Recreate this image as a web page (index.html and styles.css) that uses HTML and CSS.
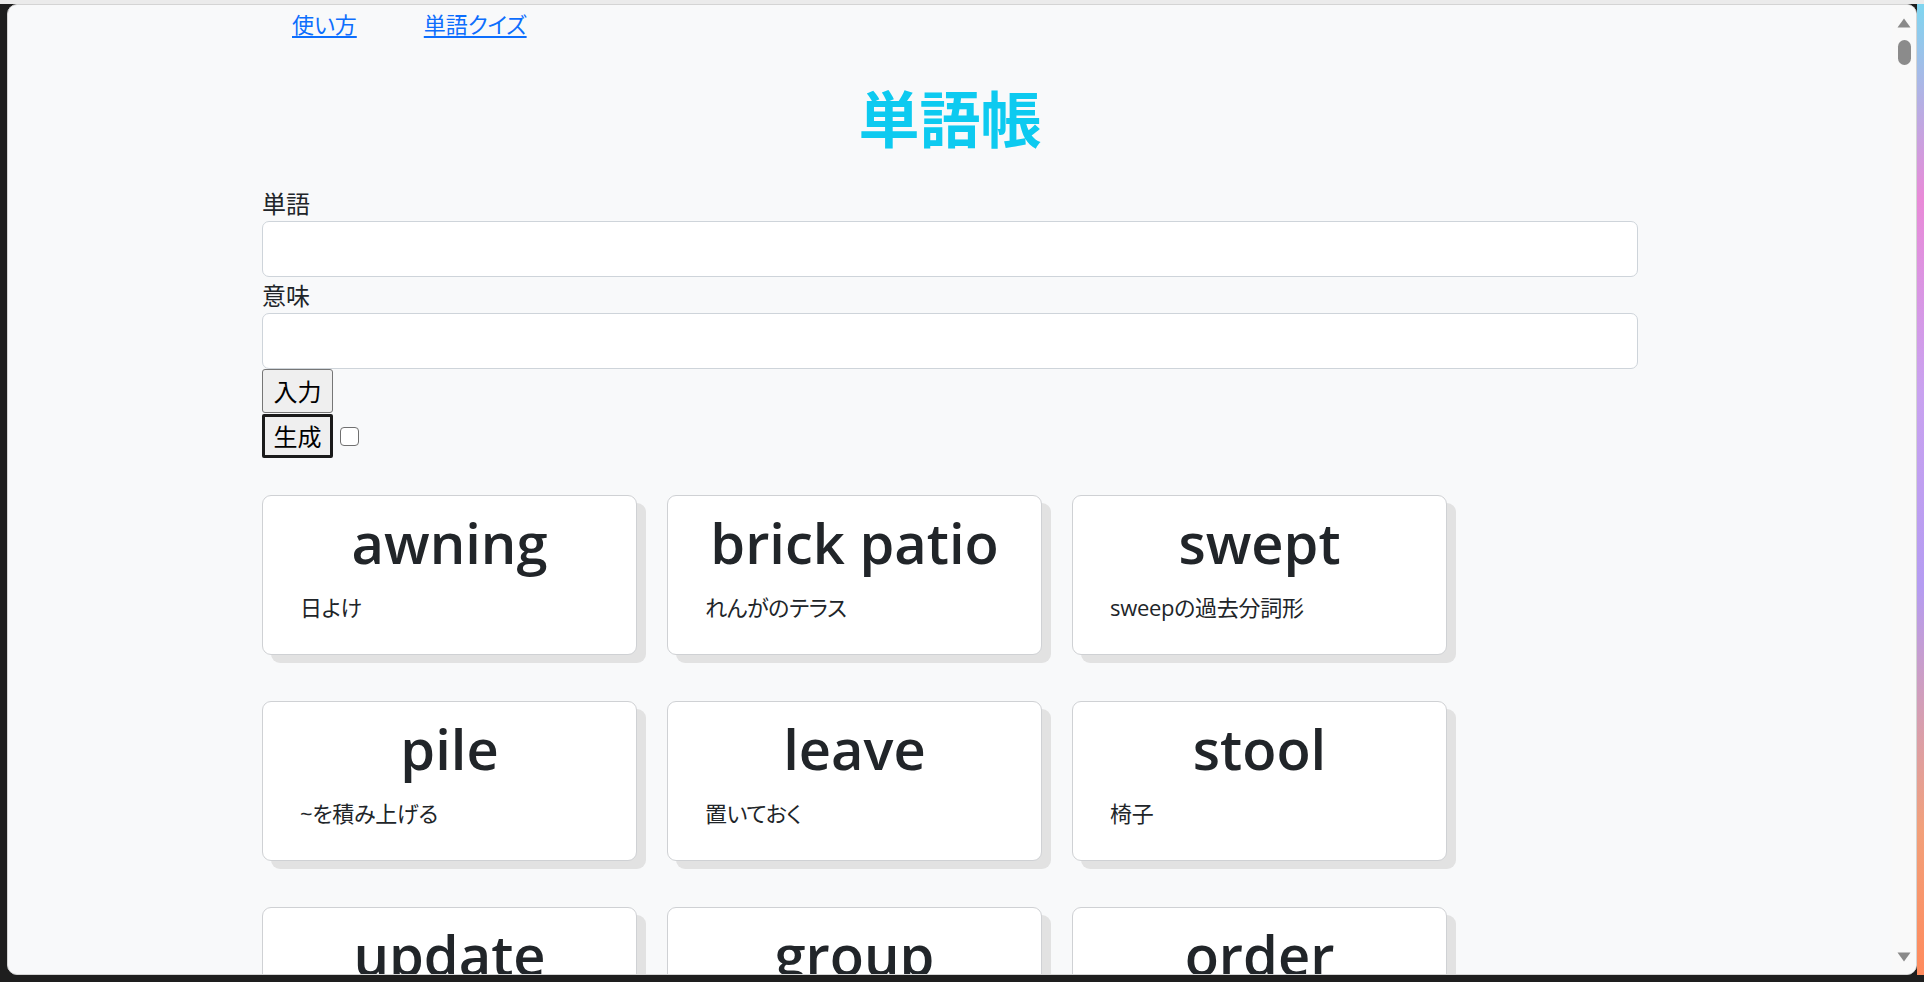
FILE: index.html
```html
<!DOCTYPE html>
<html lang="ja">
<head>
<meta charset="utf-8">
<title>単語帳</title>
<link rel="stylesheet" href="styles.css">
</head>
<body>
<div class="desktop">
  <div class="window">
    <div class="viewport">
      <div class="container">
        <nav class="topnav">
          <a href="#">使い方</a>
          <a href="#">単語クイズ</a>
        </nav>
        <h1 class="title">単語帳</h1>
        <form class="entry">
          <label class="label" for="word">単語</label>
          <input class="field" id="word" type="text">
          <label class="label" for="meaning">意味</label>
          <input class="field" id="meaning" type="text">
          <div class="btn-row"><button type="button" class="btn">入力</button></div>
          <div class="btn-row second"><button type="button" class="btn focused">生成</button><span class="check"></span></div>
        </form>
        <div class="cards">
          <div class="card"><h2 class="card-word">awning</h2><p class="card-meaning">日よけ</p></div>
          <div class="card"><h2 class="card-word">brick patio</h2><p class="card-meaning">れんがのテラス</p></div>
          <div class="card"><h2 class="card-word">swept</h2><p class="card-meaning">sweepの過去分詞形</p></div>
          <div class="card"><h2 class="card-word">pile</h2><p class="card-meaning">~を積み上げる</p></div>
          <div class="card"><h2 class="card-word">leave</h2><p class="card-meaning">置いておく</p></div>
          <div class="card"><h2 class="card-word">stool</h2><p class="card-meaning">椅子</p></div>
          <div class="card"><h2 class="card-word">update</h2><p class="card-meaning">更新する</p></div>
          <div class="card"><h2 class="card-word">group</h2><p class="card-meaning">グループ</p></div>
          <div class="card"><h2 class="card-word">order</h2><p class="card-meaning">注文</p></div>
        </div>
      </div>
    </div>
    <div class="scrollbar">
      <svg class="arrow" width="14" height="10" viewBox="0 0 14 10"><path d="M7 0.5 L13.5 9.5 L0.5 9.5 Z" fill="#8a8a8a"/></svg>
      <div class="thumb"></div>
      <svg class="arrow down" width="14" height="10" viewBox="0 0 14 10"><path d="M0.5 0.5 L13.5 0.5 L7 9.5 Z" fill="#8a8a8a"/></svg>
    </div>
  </div>
  <div class="wall-edge"></div>
</div>
</body>
</html>
```

FILE: styles.css
```css
html, body {
  margin: 0;
  height: 982px;
  overflow: hidden;
}
body {
  background: #1e1e1e;
  font-family: "Open Sans", "Noto Sans CJK JP", sans-serif;
  font-feature-settings: "palt";
  color: #212529;
}
.desktop {
  display: flex;
  height: 982px;
  box-sizing: border-box;
  padding: 4px 0 7px 7px;
  background: linear-gradient(#ebebeb 0 4px, transparent 4px);
}
.window {
  flex: none;
  width: 1910px;
  height: 971px;
  box-sizing: border-box;
  border: 1px solid #d4d4d4;
  border-radius: 10px;
  background: #f8f9fa;
  display: flex;
  overflow: hidden;
}
.viewport {
  flex: 1;
  overflow: hidden;
}
.scrollbar {
  width: 24px;
  flex: none;
  background: #f9f9f9;
  display: flex;
  flex-direction: column;
  align-items: center;
  padding: 13px 0 12px;
  box-sizing: border-box;
}
.arrow { display: block; }
.arrow.down { margin-top: auto; }
.thumb {
  width: 13px;
  height: 25px;
  margin-top: 12px;
  border-radius: 7px;
  background: #8b8b8b;
}
.wall-edge {
  flex: 1;
  background: linear-gradient(#7fd6f0, #e98ad8 20%, #c9a2f0 40%, #b59cf2 60%, #f2a07a 85%, #ff8a5c);
}
.container {
  width: 1376px;
  margin: 0 auto;
}
.topnav {
  display: flex;
  gap: 67px;
  padding-left: 30px;
  font-size: 22px;
  line-height: 36px;
  font-family: "Noto Sans CJK JP", sans-serif;
}
.topnav a {
  color: #0d6efd;
  text-decoration: underline;
  text-underline-offset: 3px;
}
.title {
  margin: 37px 0 30px;
  font-family: "Noto Sans CJK JP", sans-serif;
  font-size: 61px;
  line-height: 77px;
  font-weight: 700;
  text-align: center;
  color: #0dcaf0;
}
.entry {
  display: flex;
  flex-direction: column;
  align-items: stretch;
}
.label {
  display: block;
  font-size: 24px;
  line-height: 36px;
  font-family: "Noto Sans CJK JP", sans-serif;
}
.field {
  display: block;
  width: 100%;
  height: 56px;
  margin: 0;
  box-sizing: border-box;
  border: 1px solid #ced4da;
  border-radius: 7px;
  background: #fff;
}
.btn-row {
  display: flex;
  align-items: center;
  gap: 7px;
}
.btn-row.second { margin-top: 1px; }
.btn {
  width: 71px;
  height: 44px;
  box-sizing: border-box;
  padding: 0;
  font-family: "Noto Sans CJK JP", sans-serif;
  font-size: 24px;
  line-height: 1;
  color: #000;
  background: #efefef;
  border: 1.5px solid #767676;
  border-radius: 3px;
}
.btn.focused {
  border: 3px solid #1a1a1a;
  border-radius: 2px;
}
.check {
  width: 19px;
  height: 19px;
  box-sizing: border-box;
  border: 1.5px solid #707070;
  border-radius: 4px;
  background: #fff;
}
.cards {
  display: flex;
  flex-wrap: wrap;
  column-gap: 30px;
  row-gap: 46px;
  margin-top: 37px;
}
.card {
  width: 375px;
  height: 160px;
  box-sizing: border-box;
  background: #fff;
  border: 1px solid #cfd1d4;
  border-radius: 9px;
  box-shadow: 9px 8px 0 #e2e2e2;
}
.card-word {
  margin: 10px 0 11px;
  font-size: 56px;
  line-height: 72px;
  font-weight: 600;
  text-align: center;
  color: #212529;
}
.card-meaning {
  margin: 0;
  padding-left: 37px;
  font-size: 22px;
  line-height: 36px;
  letter-spacing: -0.3px;
}
```
